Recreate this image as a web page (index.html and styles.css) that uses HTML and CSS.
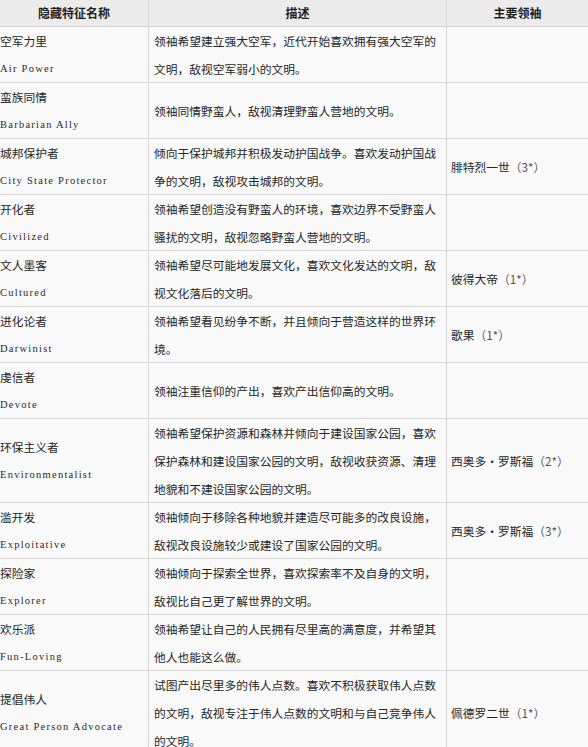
FILE: index.html
```html
<!DOCTYPE html>
<html lang="zh-CN">
<head>
<meta charset="utf-8">
<title>隐藏特征</title>
<link rel="stylesheet" href="styles.css">
</head>
<body>
<div class="table">
  <div class="row head">
    <div class="cell">隐藏特征名称</div>
    <div class="cell">描述</div>
    <div class="cell">主要领袖</div>
  </div>

  <div class="row r2">
    <div class="cell name"><span class="zh">空军力里</span><span class="en">Air Power</span></div>
    <div class="cell desc">领袖希望建立强大空军，近代开始喜欢拥有强大空军的<br>文明，敌视空军弱小的文明。</div>
    <div class="cell lead"></div>
  </div>

  <div class="row r2">
    <div class="cell name"><span class="zh">蛮族同情</span><span class="en">Barbarian Ally</span></div>
    <div class="cell desc">领袖同情野蛮人，敌视清理野蛮人营地的文明。</div>
    <div class="cell lead"></div>
  </div>

  <div class="row r2">
    <div class="cell name"><span class="zh">城邦保护者</span><span class="en">City State Protector</span></div>
    <div class="cell desc">倾向于保护城邦并积极发动护国战争。喜欢发动护国战<br>争的文明，敌视攻击城邦的文明。</div>
    <div class="cell lead"><span>腓特烈一世<span class="note">（3*）</span></span></div>
  </div>

  <div class="row r2">
    <div class="cell name"><span class="zh">开化者</span><span class="en">Civilized</span></div>
    <div class="cell desc">领袖希望创造没有野蛮人的环境，喜欢边界不受野蛮人<br>骚扰的文明，敌视忽略野蛮人营地的文明。</div>
    <div class="cell lead"></div>
  </div>

  <div class="row r2">
    <div class="cell name"><span class="zh">文人墨客</span><span class="en">Cultured</span></div>
    <div class="cell desc">领袖希望尽可能地发展文化，喜欢文化发达的文明，敌<br>视文化落后的文明。</div>
    <div class="cell lead"><span>彼得大帝<span class="note">（1*）</span></span></div>
  </div>

  <div class="row r2">
    <div class="cell name"><span class="zh">进化论者</span><span class="en">Darwinist</span></div>
    <div class="cell desc">领袖希望看见纷争不断，并且倾向于营造这样的世界环<br>境。</div>
    <div class="cell lead"><span>歌果<span class="note">（1*）</span></span></div>
  </div>

  <div class="row r2">
    <div class="cell name"><span class="zh">虔信者</span><span class="en">Devote</span></div>
    <div class="cell desc">领袖注重信仰的产出，喜欢产出信仰高的文明。</div>
    <div class="cell lead"></div>
  </div>

  <div class="row r3">
    <div class="cell name"><span class="zh">环保主义者</span><span class="en">Environmentalist</span></div>
    <div class="cell desc">领袖希望保护资源和森林并倾向于建设国家公园，喜欢<br>保护森林和建设国家公园的文明，敌视收获资源、清理<br>地貌和不建设国家公园的文明。</div>
    <div class="cell lead"><span>西奥多・罗斯福<span class="note">（2*）</span></span></div>
  </div>

  <div class="row r2">
    <div class="cell name"><span class="zh">滥开发</span><span class="en">Exploitative</span></div>
    <div class="cell desc">领袖倾向于移除各种地貌并建造尽可能多的改良设施，<br>敌视改良设施较少或建设了国家公园的文明。</div>
    <div class="cell lead"><span>西奥多・罗斯福<span class="note">（3*）</span></span></div>
  </div>

  <div class="row r2">
    <div class="cell name"><span class="zh">探险家</span><span class="en">Explorer</span></div>
    <div class="cell desc">领袖倾向于探索全世界，喜欢探索率不及自身的文明，<br>敌视比自己更了解世界的文明。</div>
    <div class="cell lead"></div>
  </div>

  <div class="row r2">
    <div class="cell name"><span class="zh">欢乐派</span><span class="en">Fun-Loving</span></div>
    <div class="cell desc">领袖希望让自己的人民拥有尽里高的满意度，并希望其<br>他人也能这么做。</div>
    <div class="cell lead"></div>
  </div>

  <div class="row r3">
    <div class="cell name"><span class="zh">提倡伟人</span><span class="en">Great Person Advocate</span></div>
    <div class="cell desc">试图产出尽里多的伟人点数。喜欢不积极获取伟人点数<br>的文明，敌视专注于伟人点数的文明和与自己竞争伟人<br>的文明。</div>
    <div class="cell lead"><span>佩德罗二世<span class="note">（1*）</span></span></div>
  </div>
</div>
</body>
</html>
```

FILE: styles.css
```css
html, body {
  margin: 0;
  padding: 0;
  background: #ffffff;
}

body {
  font-family: "Noto Sans CJK SC", "Noto Sans", sans-serif;
  font-size: 11.75px;
  color: #262626;
  overflow: hidden;
}

.table {
  width: 588px;
  display: flex;
  flex-direction: column;
}

.row {
  display: grid;
  grid-template-columns: 149px 298px 141px;
  box-sizing: border-box;
  border-bottom: 1px solid #d6d6d6;
  background: #f9f9f9;
}

.row.head {
  height: 27px;
  background: #ebebeb;
  border-bottom-color: #d2d2d2;
}

.row.r2 { height: 56px; }
.row.r3 { height: 84px; }

.cell {
  display: flex;
  flex-direction: column;
  justify-content: center;
  box-sizing: border-box;
  border-right: 1px solid #d6d6d6;
  line-height: 28px;
  white-space: nowrap;
  min-height: 0;
}

.cell:last-child {
  border-right: none;
}

.head .cell {
  align-items: center;
  font-weight: bold;
  color: #1e1e1e;
  font-size: 12px;
  line-height: 26px;
  border-right-color: #dcdcdc;
}

.name .zh,
.name .en {
  display: block;
}

.name .en {
  font-family: "Liberation Serif", "DejaVu Serif", serif;
  font-size: 10.5px;
  letter-spacing: 1.25px;
  color: #2a2a2a;
}

.desc {
  padding: 0 5px;
}

.lead {
  padding-left: 4px;
}

.note {
  color: #555555;
}
```
